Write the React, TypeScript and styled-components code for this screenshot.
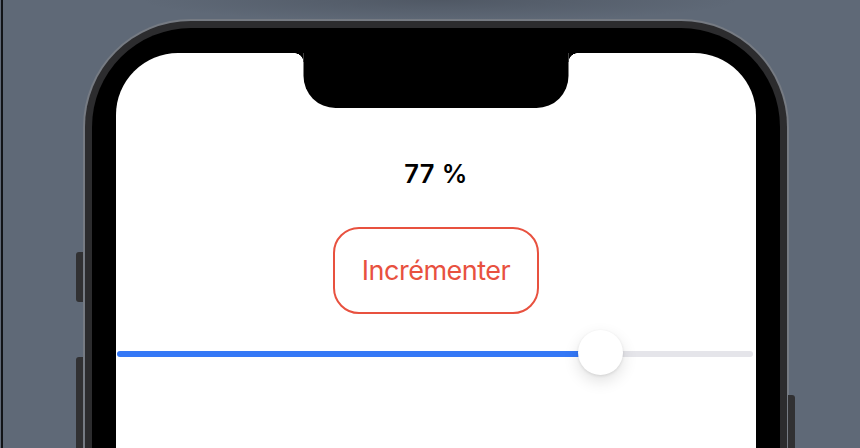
import React from "react";
import styled, { createGlobalStyle } from "styled-components";

const GlobalStyle = createGlobalStyle`
  html, body {
    margin: 0;
    padding: 0;
    background: #5f6977;
  }
  * {
    box-sizing: border-box;
  }
`;

const Stage = styled.div`
  width: 860px;
  height: 448px;
  overflow: hidden;
  padding: 19px 0 0 83px;
  background:
    radial-gradient(ellipse 300px 22px at 440px 0, rgba(40, 44, 52, 0.28), rgba(40, 44, 52, 0) 100%),
    #5f6977;
  box-shadow: inset 1px 0 0 #5f6977, inset 3px 0 0 #121417;
`;

const Frame = styled.div`
  position: relative;
  width: 706px;
  height: 520px;
  padding: 7px 7px 0;
  border: 2px solid #767b83;
  border-bottom: none;
  border-radius: 108px 108px 0 0;
  background: #2c2c2e;
`;

// hardware buttons sticking out of the frame edge
const SideButton = styled.div<{ $side: "left" | "right"; $top: number; $height: number }>`
  position: absolute;
  top: ${(p) => p.$top}px;
  ${(p) => (p.$side === "left" ? "left: -9px;" : "right: -8px;")}
  width: 7px;
  height: ${(p) => p.$height}px;
  background: #313133;
  border-radius: ${(p) => (p.$side === "left" ? "3px 0 0 3px" : "0 3px 3px 0")};
`;

const Bezel = styled.div`
  height: 100%;
  padding: 25px 24px 0;
  border-radius: 99px 99px 0 0;
  background: #000;
`;

const Screen = styled.div`
  position: relative;
  height: 100%;
  padding-top: 108px;
  display: flex;
  flex-direction: column;
  align-items: center;
  border-radius: 62px 62px 0 0;
  background: #fff;
  font-family: Inter, "Noto Sans", "Liberation Sans", sans-serif;
`;

const Notch = styled.div`
  position: absolute;
  top: 0;
  left: 50%;
  width: 265px;
  height: 55px;
  transform: translateX(-50%);
  background: #000;
  border-radius: 0 0 32px 32px;

  &::before,
  &::after {
    content: "";
    position: absolute;
    top: 0;
    width: 9px;
    height: 9px;
  }
  &::before {
    left: -9px;
    background: radial-gradient(circle at 0 100%, transparent 8.5px, #000 9px);
  }
  &::after {
    right: -9px;
    background: radial-gradient(circle at 100% 100%, transparent 8.5px, #000 9px);
  }
`;

const Value = styled.div`
  font-size: 25.5px;
  font-weight: 600;
  line-height: 25px;
  letter-spacing: 0.4px;
  color: #000;
`;

const OutlineButton = styled.button`
  margin-top: 41px;
  width: 206px;
  height: 87px;
  display: flex;
  align-items: center;
  justify-content: center;
  border: 2.5px solid #e8513f;
  border-radius: 26px;
  background: #fff;
  color: #e8513f;
  font-family: inherit;
  font-size: 27px;
  font-weight: 400;
  letter-spacing: -0.5px;
  cursor: pointer;
`;

const Slider = styled.div`
  align-self: stretch;
  margin: 16px 3px 0 1px;
  display: flex;
  align-items: flex-start;
  height: 48px;
`;

const Bar = styled.div<{ $filled?: boolean }>`
  margin-top: 21px;
  height: 6px;
  flex: ${(p) => (p.$filled ? "none" : "1")};
  background: ${(p) => (p.$filled ? "#3478f6" : "#e5e5ea")};
  border-radius: ${(p) => (p.$filled ? "3px 0 0 3px" : "0 3px 3px 0")};
`;

const Thumb = styled.div`
  position: relative;
  z-index: 1;
  flex: none;
  width: 45px;
  height: 45px;
  margin: 0 -22.5px;
  border-radius: 50%;
  background: #fff;
  box-shadow: 0 6px 16px rgba(0, 0, 0, 0.12), 0 1px 3px rgba(0, 0, 0, 0.1);
`;

const App: React.FC = () => {
  const [value, setValue] = React.useState(77);

  return (
    <>
      <GlobalStyle />
      <Stage>
        <Frame>
          <SideButton $side="left" $top={231} $height={50} />
          <SideButton $side="left" $top={336} $height={140} />
          <SideButton $side="right" $top={374} $height={140} />
          <Bezel>
            <Screen>
              <Notch />
              <Value>{value} %</Value>
              <OutlineButton onClick={() => setValue(Math.min(100, value + 1))}>
                Incrémenter
              </OutlineButton>
              <Slider>
                <Bar $filled style={{ width: `calc(${value}% - 6px)` }} />
                <Thumb />
                <Bar />
              </Slider>
            </Screen>
          </Bezel>
        </Frame>
      </Stage>
    </>
  );
};

export default App;
